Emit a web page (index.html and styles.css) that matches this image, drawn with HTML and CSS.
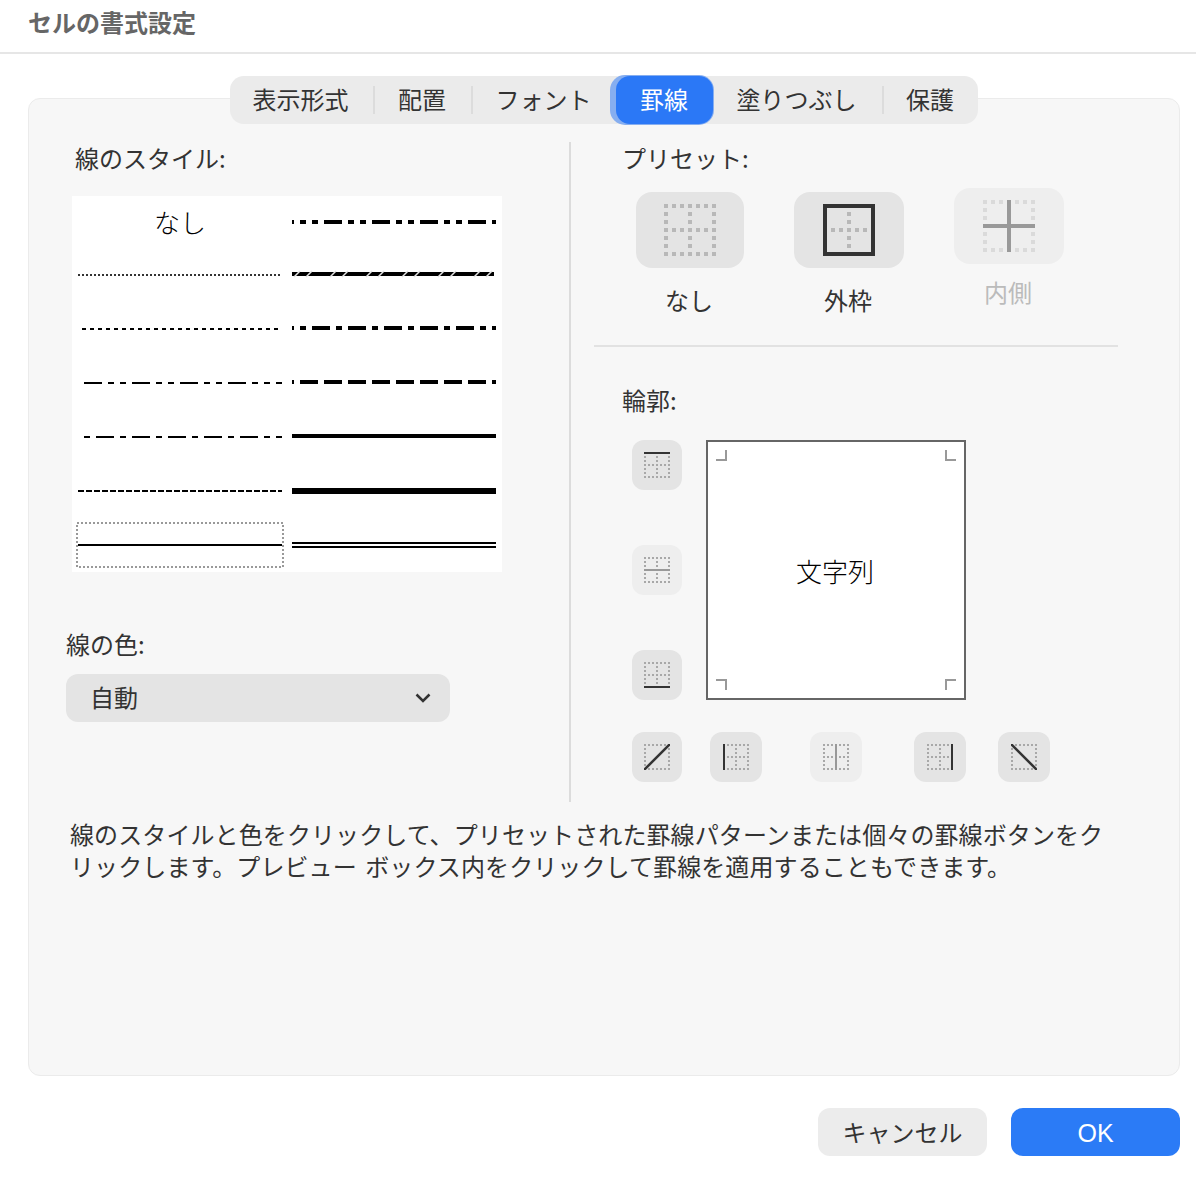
FILE: index.html
```html
<!DOCTYPE html>
<html lang="ja">
<head>
<meta charset="utf-8">
<title>セルの書式設定</title>
<link rel="stylesheet" href="styles.css">
</head>
<body>
<svg class="defs" width="0" height="0" aria-hidden="true">
  <defs>
    <pattern id="slash" width="36" height="8" patternUnits="userSpaceOnUse">
      <path d="M2 7 L8 1 M14 7 L20 1" class="slash-stroke"/>
    </pattern>
    <symbol id="s-grid" viewBox="0 0 26 26">
      <path class="sd" d="M0 1H26M0 13H26M0 25H26M1 0V26M13 0V26M25 0V26"/>
    </symbol>
    <symbol id="s-box" viewBox="0 0 26 26">
      <path class="sd" d="M0 1H26M0 25H26M1 0V26M25 0V26"/>
    </symbol>
    <symbol id="l-grid" viewBox="0 0 52 52">
      <path class="ld" d="M0 2H52M0 26H52M0 50H52M2 0V52M26 0V52M50 0V52"/>
    </symbol>
  </defs>
</svg>
<div class="dialog">
  <header class="title-bar"><h1 class="title">セルの書式設定</h1></header>
  <main class="panel">
    <nav class="tabs">
      <span class="tab">表示形式</span><i class="tab-div"></i>
      <span class="tab">配置</span><i class="tab-div"></i>
      <span class="tab">フォント</span>
      <span class="tab tab-active">罫線</span>
      <span class="tab">塗りつぶし</span><i class="tab-div"></i>
      <span class="tab">保護</span>
    </nav>
    <div class="columns">
      <section class="left">
        <div class="label label-style">線のスタイル:</div>
        <div class="line-list">
          <div class="cell cell-text">なし</div>
          <div class="cell cell-r"><svg class="ln" viewBox="0 0 204 8"><line x1="0" y1="4" x2="204" y2="4" class="thick d-dd"/></svg></div>
          <div class="cell cell-l"><svg class="ln" viewBox="0 0 204 8"><line x1="0" y1="4" x2="204" y2="4" class="thin d-dot"/></svg></div>
          <div class="cell cell-r"><svg class="ln" viewBox="0 0 204 8"><rect x="0" y="2" width="202" height="4" class="fill-k"/><rect x="0" y="0" width="202" height="8" fill="url(#slash)"/></svg></div>
          <div class="cell cell-l"><svg class="ln" viewBox="0 0 204 8"><line x1="0" y1="4" x2="204" y2="4" class="thin d-short"/></svg></div>
          <div class="cell cell-r"><svg class="ln" viewBox="0 0 204 8"><line x1="0" y1="4" x2="204" y2="4" class="thick d-d"/></svg></div>
          <div class="cell cell-l"><svg class="ln" viewBox="0 0 204 8"><line x1="6" y1="4" x2="204" y2="4" class="thin d-dd2"/></svg></div>
          <div class="cell cell-r"><svg class="ln" viewBox="0 0 204 8"><line x1="0" y1="4" x2="204" y2="4" class="thick d-dash"/></svg></div>
          <div class="cell cell-l"><svg class="ln" viewBox="0 0 204 8"><line x1="6" y1="4" x2="204" y2="4" class="thin d-d2"/></svg></div>
          <div class="cell cell-r"><svg class="ln" viewBox="0 0 204 8"><line x1="0" y1="4" x2="204" y2="4" class="thick"/></svg></div>
          <div class="cell cell-l"><svg class="ln" viewBox="0 0 204 8"><line x1="0" y1="4" x2="204" y2="4" class="thin d-med"/></svg></div>
          <div class="cell cell-r cell-down"><svg class="ln" viewBox="0 0 204 8"><line x1="0" y1="4" x2="204" y2="4" class="heavy"/></svg></div>
          <div class="cell cell-l">
            <svg class="focus-box" viewBox="0 0 208 46"><rect x="1" y="1" width="206" height="44"/></svg>
            <svg class="ln" viewBox="0 0 204 8"><line x1="0" y1="4" x2="204" y2="4" class="thin"/></svg>
          </div>
          <div class="cell cell-r cell-down"><svg class="ln" viewBox="0 0 204 8"><line x1="0" y1="2" x2="204" y2="2" class="thin"/><line x1="0" y1="6" x2="204" y2="6" class="thin"/></svg></div>
        </div>
        <div class="label label-color">線の色:</div>
        <div class="select">
          <span>自動</span>
          <svg class="chev" viewBox="0 0 16 10"><path d="M1.5 1.5 L8 8 L14.5 1.5"/></svg>
        </div>
      </section>
      <section class="right">
        <div class="label">プリセット:</div>
        <div class="presets">
          <div class="preset preset-none">
            <div class="pbtn"><svg class="licon"><use href="#l-grid"/></svg></div>
            <div class="plabel">なし</div>
          </div>
          <div class="preset">
            <div class="pbtn"><svg class="licon" viewBox="0 0 52 52"><path class="ld" d="M8 26H44M26 8V44"/><rect x="2" y="2" width="48" height="48" class="frame"/></svg></div>
            <div class="plabel">外枠</div>
          </div>
          <div class="preset preset-off">
            <div class="pbtn pbtn-off"><svg class="licon off" viewBox="0 0 52 52"><path class="ld" d="M0 2H52M0 50H52M2 0V52M50 0V52"/><path class="cross" d="M0 26H52M26 0V52"/></svg></div>
            <div class="plabel plabel-off">内側</div>
          </div>
        </div>
        <div class="rule"></div>
        <div class="label label-outline">輪郭:</div>
        <div class="outline">
          <div class="side-btns">
            <div class="sbtn"><svg class="sicon" viewBox="0 0 26 26"><use href="#s-grid"/><path class="on" d="M0 1H26"/></svg></div>
            <div class="sbtn sbtn-off"><svg class="sicon off" viewBox="0 0 26 26"><use href="#s-grid"/><path class="on-off" d="M0 13H26"/></svg></div>
            <div class="sbtn"><svg class="sicon" viewBox="0 0 26 26"><use href="#s-grid"/><path class="on" d="M0 25H26"/></svg></div>
          </div>
          <div class="preview">
            <i class="mark mark-tl"></i><i class="mark mark-tr"></i><i class="mark mark-bl"></i><i class="mark mark-br"></i>
            <span class="preview-text">文字列</span>
          </div>
        </div>
        <div class="bottom-btns">
          <div class="sbtn"><svg class="sicon" viewBox="0 0 26 26"><use href="#s-box"/><path class="on diag" d="M0 26L26 0"/></svg></div>
          <div class="sbtn sbtn-w"><svg class="sicon" viewBox="0 0 26 26"><use href="#s-grid"/><path class="on" d="M1 0V26"/></svg></div>
          <div class="sbtn sbtn-w sbtn-off gap-b"><svg class="sicon off" viewBox="0 0 26 26"><use href="#s-grid"/><path class="on-off" d="M13 0V26"/></svg></div>
          <div class="sbtn sbtn-w gap-c"><svg class="sicon" viewBox="0 0 26 26"><use href="#s-grid"/><path class="on" d="M25 0V26"/></svg></div>
          <div class="sbtn sbtn-w gap-d"><svg class="sicon" viewBox="0 0 26 26"><use href="#s-box"/><path class="on diag" d="M0 0L26 26"/></svg></div>
        </div>
      </section>
    </div>
    <p class="desc">線のスタイルと色をクリックして、プリセットされた罫線パターンまたは個々の罫線ボタンをクリックします。プレビュー ボックス内をクリックして罫線を適用することもできます。</p>
  </main>
  <footer class="footer">
    <button class="btn btn-cancel">キャンセル</button>
    <button class="btn btn-ok">OK</button>
  </footer>
</div>
</body>
</html>
```

FILE: styles.css
```css
* { box-sizing: border-box; }
html, body { margin: 0; padding: 0; height: 100%; background: #fff; }
body {
  font-family: "Noto Sans CJK JP", "Liberation Sans", sans-serif;
  font-size: 24px;
  line-height: 32px;
  color: #333;
  overflow: hidden;
}
.defs { position: absolute; }
.dialog { display: flex; flex-direction: column; height: 100vh; }

.title-bar { height: 54px; padding: 6px 28px 0; border-bottom: 2px solid #e6e6e6; }
.title { margin: 0; font-size: 24px; line-height: 32px; font-weight: 700; color: #666; }

.panel {
  position: relative;
  flex: 1;
  margin: 44px 16px 0 28px;
  padding: 43px 0 0 37px;
  background: #f7f7f7;
  border: 1px solid #ebebeb;
  border-radius: 12px;
}

.tabs {
  position: absolute;
  top: -23px;
  left: 201px;
  width: 748px;
  height: 48px;
  display: grid;
  grid-template-columns: 143px 2px 96px 2px 143px 97px 169px 2px 94px;
  align-items: center;
  background: #ebebeb;
  border-radius: 14px;
}
.tab { text-align: center; color: #333; height: 48px; line-height: 46px; padding-right: 2px; }
.tab-div { display: block; width: 2px; height: 28px; background: #dcdcdc; }
.tab-active {
  background: #2b78f6;
  color: #fff;
  border-radius: 14px;
  padding-right: 1px;
  box-shadow: -5px 0 0 1px #86aef0, 0 0 0 1px #86aef0;
}

.columns { display: flex; height: 660px; }
.left { width: 503px; flex: none; }
.right { width: 549px; flex: none; border-left: 2px solid #dcdcdc; padding: 0 0 0 51px; }
.label { color: #333; }
.label-style { margin-left: 9px; }
.label-color { margin: 56px 0 0 0; }
.label-outline { margin-top: 37px; }

.line-list {
  margin: 22px 0 0 6px;
  width: 430px;
  height: 376px;
  background: #fff;
  display: grid;
  grid-template-columns: 216px 214px;
  grid-template-rows: 51px repeat(6, 54px);
}
.cell { position: relative; display: flex; align-items: center; }
.cell-l { padding: 2px 0 0 6px; }
.cell-r { padding-left: 4px; }
.cell-down { padding-top: 2px; }
.cell-text { justify-content: center; color: #000; font-weight: 300; font-size: 26px; }
.focus-box {
  position: absolute;
  left: 4px;
  top: 5px;
  width: 208px;
  height: 46px;
  shape-rendering: crispEdges;
}
.focus-box rect { fill: none; stroke: #999; stroke-width: 2; stroke-dasharray: 2 2; }
.ln { display: block; position: relative; width: 204px; height: 8px; shape-rendering: crispEdges; }
.ln line { stroke: #000; }
.thin { stroke-width: 2; }
.thick { stroke-width: 4; }
.heavy { stroke-width: 6; }
.fill-k { fill: #000; }
.slash-stroke { stroke: #e4e4e4; stroke-width: 1.5; fill: none; }
.ln .d-dot { stroke: #333; stroke-dasharray: 2 2; }
.d-short { stroke-dasharray: 4 4; stroke-dashoffset: 4; }
.d-med { stroke-dasharray: 6 2; }
.d-dd { stroke-dasharray: 18 6 6 6 6 6; stroke-dashoffset: 16; }
.d-d { stroke-dasharray: 18 6 6 6; stroke-dashoffset: 16; }
.d-dash { stroke-dasharray: 18 6; stroke-dashoffset: 16; }
.d-dd2 { stroke-dasharray: 18 6 6 6 6 6; }
.d-d2 { stroke-dasharray: 6 6 18 6; }

.select {
  margin-top: 14px;
  width: 384px;
  height: 48px;
  background: #e4e4e4;
  border-radius: 12px;
  padding: 0 19px 2px 24px;
  display: flex;
  align-items: center;
  justify-content: space-between;
}
.chev { width: 16px; height: 10px; margin-top: 2px; }
.chev path { fill: none; stroke: #333; stroke-width: 2.5; }

.presets { display: flex; gap: 50px; margin: 18px 0 0 14px; }
.preset { width: 110px; }
.preset-none { width: 108px; }
.preset-off { margin-top: -4px; }
.pbtn {
  height: 76px;
  background: #e4e4e4;
  border-radius: 16px;
  display: flex;
  align-items: center;
  justify-content: center;
}
.pbtn-off { background: #eeeeee; }
.plabel { margin-top: 16px; padding-right: 2px; text-align: center; color: #333; }
.plabel-off { margin-top: 12px; color: #bbb; }
.licon { width: 52px; height: 52px; display: block; shape-rendering: crispEdges; }
.ld { fill: none; stroke: #b8b8b8; stroke-width: 4; stroke-dasharray: 4 4; }
.frame { fill: none; stroke: #333; stroke-width: 4; }
.licon.off .ld { stroke: #dadada; }
.cross { fill: none; stroke: #999; stroke-width: 4; }

.rule { height: 2px; width: 524px; margin: 29px 0 0 -28px; background: #e2e2e2; }

.outline { display: flex; margin: 24px 0 0 10px; gap: 24px; }
.side-btns { display: flex; flex-direction: column; justify-content: space-between; height: 260px; }
.sbtn {
  width: 50px;
  height: 50px;
  background: #e4e4e4;
  border-radius: 12px;
  display: flex;
  align-items: center;
  justify-content: center;
}
.sbtn-w { width: 52px; }
.sbtn-off { background: #eeeeee; }
.sicon { width: 26px; height: 26px; display: block; }
.sd { fill: none; stroke: #a8a8a8; stroke-width: 2; stroke-dasharray: 2 2; shape-rendering: crispEdges; }
.sicon.off .sd { stroke: #d0d0d0; }
.on { fill: none; stroke: #333; stroke-width: 2; }
.diag { stroke-width: 2.5; }
.on-off { fill: none; stroke: #999; stroke-width: 2; }

.preview {
  position: relative;
  width: 260px;
  height: 260px;
  background: #fff;
  border: 2px solid #666;
  display: flex;
  align-items: center;
  justify-content: center;
}
.preview-text { color: #000; font-weight: 300; font-size: 26px; margin: 2px 2px 0 0; }
.mark { position: absolute; width: 11px; height: 11px; border: 0 solid #999; }
.mark-tl { left: 8px; top: 8px; border-right-width: 2px; border-bottom-width: 2px; }
.mark-tr { right: 8px; top: 8px; border-left-width: 2px; border-bottom-width: 2px; }
.mark-bl { left: 8px; bottom: 8px; border-right-width: 2px; border-top-width: 2px; }
.mark-br { right: 8px; bottom: 8px; border-left-width: 2px; border-top-width: 2px; }

.bottom-btns { display: flex; margin: 32px 0 0 10px; gap: 28px; }
.gap-b { margin-left: 20px; }
.gap-c { margin-left: 24px; }
.gap-d { margin-left: 4px; }

.desc { margin: 16px 0 0 4px; width: 1040px; color: #333; letter-spacing: 0.1px; word-spacing: 3px; }

.footer { display: flex; justify-content: flex-end; gap: 24px; padding: 32px 16px 28px 0; }
.btn {
  width: 169px;
  height: 48px;
  border: 0;
  border-radius: 12px;
  font: inherit;
  padding: 0;
}
.btn-cancel { background: #ececec; color: #333; }
.btn-ok { background: #2b7bf6; color: #fff; font-family: "Liberation Sans", sans-serif; font-size: 25px; padding-top: 2px; }
```
